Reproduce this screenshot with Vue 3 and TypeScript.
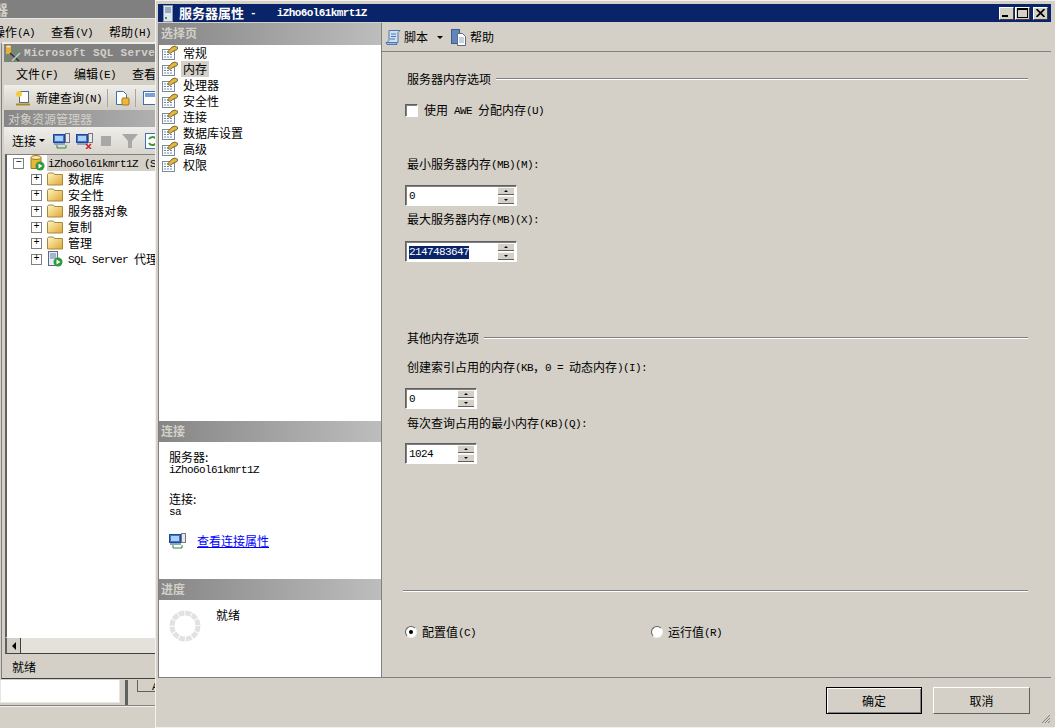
<script setup lang="ts">
import { h, type FunctionalComponent } from 'vue'

const Tx: FunctionalComponent<{ s: string }> = (props) =>
  h(
    'span',
    { class: 'tx' },
    (props.s.match(/[\x00-\x7f]+|[^\x00-\x7f]+/g) ?? []).map((part) =>
      h('span', { class: /^[\x00-\x7f]/.test(part) ? 'lat' : 'cjk' }, part),
    ),
  )

const pages = ['常规', '内存', '处理器', '安全性', '连接', '数据库设置', '高级', '权限']
const treeRows = ['数据库', '安全性', '服务器对象', '复制', '管理']
const backMenu = ['操作(A)', '查看(V)', '帮助(H)']
const innerMenu = ['文件(F)', '编辑(E)', '查看(V)']
</script>

<template>
  <div class="desktop">
    <svg class="defs" width="0" height="0" aria-hidden="true">
      <symbol id="page" viewBox="0 0 16 16">
        <rect x="0.5" y="4.5" width="12" height="10" fill="#fff" stroke="#7f8a99" />
        <path d="M2 7h5M2 9.500h9M2 12h9" stroke="#6f86ac" stroke-dasharray="2 1" />
        <path d="M5.500 7 10 2l3-1 3 1.500-1 2-5 2.500-2 1.500z" fill="#e3b63e" stroke="#5c4a1c" stroke-width="0.8" />
      </symbol>
      <symbol id="folder" viewBox="0 0 16 14">
        <linearGradient id="fg" x1="0" y1="0" x2="1" y2="1">
          <stop offset="0" stop-color="#fff6c8" />
          <stop offset="1" stop-color="#e0a82e" />
        </linearGradient>
        <path d="M.5 13V2.500L1.500 1h5l1 1.500h8V13z" fill="url(#fg)" stroke="#a78a3c" />
      </symbol>
      <symbol id="server" viewBox="0 0 17 16">
        <rect x="0.500" y="1.500" width="11" height="8" fill="#3f74d6" stroke="#26468c" />
        <rect x="2" y="3" width="8" height="5" fill="#a9d0f5" />
        <rect x="1" y="10" width="11" height="2" fill="#8fa4c4" />
        <rect x="12.500" y="0.500" width="4" height="9" fill="#e8e8e8" stroke="#70788a" />
      </symbol>
    </svg>

    <!-- main window behind the dialog -->
    <section class="back">
      <div class="b-title"><span class="b-char">器</span></div>
      <nav class="b-menu">
        <span v-for="m in backMenu" :key="m"><Tx :s="m" /></span>
      </nav>
      <div class="b-inner">
        <div class="i-title">
          <svg class="i-logo" width="16" height="17" viewBox="0 0 16 17">
            <path d="M1.500 5.500h11v10h-11z" fill="none" stroke="#3fa83f" stroke-dasharray="2 1" />
            <rect x="1" y="1" width="5" height="8" fill="#e8b030" />
            <ellipse cx="3.500" cy="1.500" rx="2.500" ry="1" fill="#fbe9a0" />
            <path d="M5 8 14 16" stroke="#333" stroke-width="1.500" />
            <path d="M15 8 7 16" stroke="#c8ccd4" stroke-width="1.500" />
          </svg>
          <span class="i-name">Microsoft SQL Server</span>
        </div>
        <nav class="i-menu">
          <span v-for="m in innerMenu" :key="m"><Tx :s="m" /></span>
        </nav>
        <div class="i-tools">
          <i class="grip"></i>
          <svg width="16" height="16" viewBox="0 0 16 16">
            <rect x="4.500" y="1.500" width="9" height="11" fill="#fff" stroke="#5a6a80" />
            <circle cx="4" cy="4" r="3" fill="#f3cc3c" />
            <path d="M1 14.500h14" stroke="#b08a20" stroke-width="2" />
          </svg>
          <span class="t-label"><Tx s="新建查询(N)" /></span>
          <i class="sep"></i>
          <svg width="15" height="16" viewBox="0 0 15 16">
            <path d="M1.500 1.500h7l3 3v10h-10z" fill="#fff" stroke="#3f6fb0" />
            <rect x="7" y="8" width="7" height="7" rx="1" fill="#f0b838" stroke="#a07818" />
          </svg>
          <i class="sep"></i>
          <svg width="16" height="16" viewBox="0 0 16 16">
            <rect x="0.500" y="1.500" width="13" height="13" fill="#fff" stroke="#3f6fb0" />
            <rect x="2" y="3" width="10" height="4" fill="#7aa0d8" />
          </svg>
        </div>
        <div class="i-head">对象资源管理器</div>
        <div class="i-oe-tools">
          <span class="oe-conn">连接</span>
          <i class="caret"></i>
          <svg class="oe-a" width="17" height="16"><use href="#server" /><path d="M4 12v3h9v-3" fill="none" stroke="#2c8c2c" /></svg>
          <svg class="oe-b" width="17" height="16"><use href="#server" /><path d="M10 11l5 5M15 11l-5 5" stroke="#d02020" stroke-width="1.500" /></svg>
          <i class="oe-stop"></i>
          <svg class="oe-c" width="16" height="14" viewBox="0 0 16 14"><path d="M0 0h16L10 7v7H6V7z" fill="#a8a8a8" /></svg>
          <svg class="oe-d" width="14" height="16" viewBox="0 0 14 16">
            <rect x="0.500" y="0.500" width="14" height="15" fill="#fff" stroke="#3f6fb0" />
            <path d="M4 6a4 4 0 0 1 7 0M11 10a4 4 0 0 1-7 0" fill="none" stroke="#3a9a3a" stroke-width="2" />
          </svg>
        </div>
        <div class="tree">
          <div class="root">
            <i class="box">−</i>
            <svg class="db" width="15" height="16" viewBox="0 0 15 16">
              <path d="M1 2.500h10v11H1z" fill="#eab838" stroke="#9a7a20" />
              <ellipse cx="6" cy="2.500" rx="5" ry="2" fill="#fbe9a0" stroke="#9a7a20" />
              <circle cx="10" cy="11" r="4.500" fill="#2f9a3a" />
              <path d="M8.500 8.500v5l4-2.500z" fill="#fff" />
            </svg>
            <span class="root-name"><Tx s="iZho6ol61kmrt1Z (SQL" /></span>
          </div>
          <div v-for="r in treeRows" :key="r" class="t-row">
            <i class="box">+</i>
            <svg width="16" height="14"><use href="#folder" /></svg>
            <span class="t-text">{{ r }}</span>
          </div>
          <div class="t-row">
            <i class="box">+</i>
            <svg width="16" height="16" viewBox="0 0 16 16">
              <rect x="1.500" y="0.500" width="9" height="14" fill="#e6edf6" stroke="#5a6a80" />
              <path d="M3 3h6M3 5h6M3 7h6" stroke="#5f7fb0" />
              <circle cx="11" cy="11" r="4.500" fill="#2f9a3a" />
              <path d="M9.500 8.500v5l4-2.500z" fill="#fff" />
            </svg>
            <span class="t-text"><Tx s="SQL Server 代理" /></span>
          </div>
        </div>
        <div class="hscroll">
          <i class="arrow-btn"><b></b></i>
        </div>
        <div class="i-status">就绪</div>
      </div>
      <div class="b-under">
        <div class="u-top">
          <div class="u-field"></div>
          <i class="u-bar"></i>
          <div class="u-btn"><span class="lat">A</span></div>
        </div>
        <i class="u-rule"></i>
      </div>
    </section>

    <!-- server properties dialog -->
    <section class="dialog">
      <header class="d-title">
        <svg class="d-icon" width="10" height="17" viewBox="0 0 10 17">
          <rect x="0.500" y="0.500" width="9" height="16" fill="#dfe7f3" stroke="#8a97ab" />
          <path d="M2 3h6M2 5h6M2 7h6" stroke="#5b6e8c" />
          <rect x="2" y="12" width="2" height="2" fill="#3a9a3a" />
        </svg>
        <span class="d-name">服务器属性</span>
        <span class="d-dash">-</span>
        <span class="d-host">iZho6ol61kmrt1Z</span>
        <div class="d-btns">
          <button class="wbtn" type="button" aria-label="最小化"><i class="w-min"></i></button>
          <button class="wbtn" type="button" aria-label="最大化"><i class="w-max"></i></button>
          <button class="wbtn w-gap" type="button" aria-label="关闭">
            <svg width="9" height="8" viewBox="0 0 9 8"><path d="M.5 0 8.500 8M8.500 0 .5 8" stroke="#000" stroke-width="1.700" /></svg>
          </button>
        </div>
      </header>

      <div class="d-body">
        <aside class="side">
          <div class="s-head tall">选择页</div>
          <ul class="s-list">
            <li v-for="(p, i) in pages" :key="p" class="s-item">
              <svg width="16" height="16"><use href="#page" /></svg>
              <span class="s-text" :class="{ on: i === 1 }">{{ p }}</span>
            </li>
          </ul>
          <div class="s-head conn-head">连接</div>
          <div class="s-conn">
            <div class="c-label">服务器:</div>
            <div class="c-val"><span class="lat">iZho6ol61kmrt1Z</span></div>
            <div class="c-label c-second">连接:</div>
            <div class="c-val"><span class="lat">sa</span></div>
            <div class="c-link">
              <svg width="17" height="16"><use href="#server" /><path d="M4 12v3h9v-3" fill="none" stroke="#2c8c2c" /></svg>
              <a href="#" @click.prevent>查看连接属性</a>
            </div>
          </div>
          <div class="s-head">进度</div>
          <div class="s-prog">
            <svg width="32" height="32" viewBox="0 0 32 32" class="spin">
              <circle cx="16" cy="16" r="13" fill="none" stroke="#e2e2e2" stroke-width="5" stroke-dasharray="5.800 1" />
            </svg>
            <span>就绪</span>
          </div>
        </aside>

        <main class="content">
          <div class="c-tools">
            <svg width="17" height="17" viewBox="0 0 17 17">
              <path d="M4 1.500h11l-2 2v10H2l2-2z" fill="#cfe0f3" stroke="#4f79ae" />
              <path d="M6 5h5M6 7.500h5M5 10h5" stroke="#4f79ae" />
              <path d="M1 13.500h10l1 2H2z" fill="#9cbbe0" stroke="#4f79ae" />
            </svg>
            <span class="ct-script">脚本</span>
            <i class="caret ct-caret"></i>
            <svg class="ct-help" width="16" height="17" viewBox="0 0 16 17">
              <rect x="0.500" y="0.500" width="8" height="14" fill="#5f86bd" stroke="#3a5d90" />
              <path d="M6.500 4.500h5l3 3v9h-8z" fill="#fff" stroke="#5a6a80" />
              <path d="M8 9h5M8 11h5M8 13h5" stroke="#8fa2bf" />
            </svg>
            <span class="ct-helptext">帮助</span>
          </div>

          <div class="form">
            <div class="sec s1"><span>服务器内存选项</span><i class="rule"></i></div>
            <label class="check-row"><i class="check sunken"></i><Tx s="使用 AWE 分配内存(U)" /></label>
            <div class="lbl m40"><Tx s="最小服务器内存(MB)(M):" /></div>
            <div class="spin-box wide sunken m14">
              <span class="val"><span class="lat">0</span></span>
              <span class="updown"><i class="up"></i><i class="down"></i></span>
            </div>
            <div class="lbl m6"><Tx s="最大服务器内存(MB)(X):" /></div>
            <div class="spin-box wide sunken m15">
              <span class="val sel-wrap"><span class="lat sel">2147483647</span></span>
              <span class="updown"><i class="up"></i><i class="down"></i></span>
            </div>
            <div class="sec s2"><span>其他内存选项</span><i class="rule"></i></div>
            <div class="lbl m15"><Tx s="创建索引占用的内存(KB，0 = 动态内存)(I):" /></div>
            <div class="spin-box narrow sunken m14">
              <span class="val"><span class="lat">0</span></span>
              <span class="updown"><i class="up"></i><i class="down"></i></span>
            </div>
            <div class="lbl m7"><Tx s="每次查询占用的最小内存(KB)(Q):" /></div>
            <div class="spin-box narrow sunken m13">
              <span class="val"><span class="lat">1024</span></span>
              <span class="updown"><i class="up"></i><i class="down"></i></span>
            </div>
            <i class="rule full"></i>
            <div class="radios">
              <label class="radio-item"><i class="radio checked"></i><Tx s="配置值(C)" /></label>
              <label class="radio-item"><i class="radio"></i><Tx s="运行值(R)" /></label>
            </div>
          </div>
        </main>
      </div>

      <footer class="d-foot">
        <button class="btn primary" type="button">确定</button>
        <button class="btn" type="button">取消</button>
        <svg class="resize" width="10" height="10" viewBox="0 0 10 10">
          <path d="M9 1 1 9M9 4 4 9M9 7 7 9" stroke="#808080" />
        </svg>
      </footer>
    </section>
  </div>
</template>

<style scoped>
.desktop {
  position: relative;
  width: 1055px;
  height: 728px;
  overflow: hidden;
  background: #d4d0c8;
  font: 12px/14px "Noto Sans CJK SC", "Liberation Mono", sans-serif;
  color: #000;
}
.defs { position: absolute; }
i { display: block; font-style: normal; }
svg { display: block; flex: none; }

/* back window */
.back { position: absolute; left: 0; top: 0; width: 155px; height: 728px; overflow: hidden; }
.b-title { height: 18px; background: #808080; border-bottom: 1px solid #e8e6e0; overflow: hidden; }
.b-char { display: block; margin-left: -6px; font-weight: 700; font-size: 14px; line-height: 18px; color: #d4d0c8; }
.b-menu { height: 23px; box-sizing: border-box; padding-top: 3px; display: flex; align-items: center; gap: 16px; margin-left: -7px; white-space: nowrap; }
.b-inner {
  height: 637px;
  display: flex;
  flex-direction: column;
  border-top: 2px solid #eeece6;
  border-left: 1px solid #808080;
  border-bottom: 1px solid #404040;
  margin-left: 1px;
  padding-left: 2px;
  box-sizing: border-box;
}
.i-title { height: 18px; flex: none; background: #808080; display: flex; align-items: center; padding-left: 1px; white-space: nowrap; overflow: hidden; }
.i-logo { margin-right: 3px; }
.i-name { font: 700 11px/18px "Liberation Mono", monospace; letter-spacing: 0.300px; color: #d4d0c8; }
.i-menu { height: 23px; box-sizing: border-box; padding: 1px 0 0 12px; flex: none; display: flex; align-items: center; gap: 16px; white-space: nowrap; }
.i-tools { height: 23px; box-sizing: border-box; flex: none; display: flex; align-items: center; padding: 2px 0 0 8px; background: linear-gradient(#efede8, #d4d0c8); white-space: nowrap; }
.grip { width: 3px; height: 16px; margin-right: 3px; background: repeating-linear-gradient(#8a8a8a 0 2px, transparent 2px 4px); }
.t-label { margin: 0 0 0 5px; }
.sep { width: 1px; height: 18px; background: #a8a6a0; margin: 0 7px 0 5px; flex: none; }
.i-head { margin-top: 2px; height: 17px; flex: none; line-height: 17px; padding-left: 4px; color: #d4d0c8; background: linear-gradient(90deg, #868686, #b0b0b0); white-space: nowrap; }
.i-oe-tools { height: 27px; flex: none; display: flex; align-items: center; background: linear-gradient(#f0eeea, #d8d5ce); padding-left: 8px; }
.oe-conn { width: 27px; flex: none; white-space: nowrap; }
.caret { width: 0; height: 0; flex: none; border: 3px solid transparent; border-top: 3px solid #000; border-bottom: 0; }
.oe-a { margin-left: 8px; }
.oe-b { margin-left: 6px; }
.oe-stop { width: 10px; height: 10px; background: #a8a8a8; margin-left: 8px; flex: none; }
.oe-c { margin-left: 11px; }
.oe-d { margin-left: 7px; }
.tree { flex: 1; background: #fff; border-top: 1px solid #808080; border-left: 2px solid #606060; margin-left: 1px; min-height: 0; overflow: hidden; white-space: nowrap; }
.box {
  width: 9px; height: 9px; border: 1px solid #808080; background: #fff; flex: none;
  font: 10px/8px "Liberation Mono", monospace; text-align: center;
}
.root { height: 16px; display: flex; align-items: center; padding-left: 6px; }
.db { margin-left: 6px; }
.root-name { margin-left: 2px; background: #d4d0c8; flex: 1; line-height: 16px; padding-left: 1px; }
.t-row { height: 16px; display: flex; align-items: center; padding-left: 24px; }
.t-row svg { margin-left: 5px; }
.t-text { margin-left: 5px; }
.hscroll { height: 15px; flex: none; background: #e4e1da; border-top: 1px solid #fff; border-bottom: 1px solid #404040; margin-left: 1px; border-left: 2px solid #606060; }
.arrow-btn { width: 13px; height: 15px; background: #d4d0c8; border-right: 1px solid #404040; display: flex; align-items: center; justify-content: center; }
.arrow-btn b { width: 0; height: 0; border: 4px solid transparent; border-right: 4px solid #000; border-left: 0; }
.i-status { height: 24px; flex: none; line-height: 25px; padding-left: 8px; }
.b-under { height: 49px; padding-top: 1px; box-sizing: border-box; }
.u-top { height: 25px; display: flex; }
.u-field { width: 120px; height: 23px; background: #fff; border: 1px solid #e8e6e0; box-sizing: border-box; border-top: 0; flex: none; }
.u-bar { width: 3px; height: 25px; background: #606060; margin-left: 5px; flex: none; }
.u-btn { width: 18px; height: 12px; flex: none; margin-left: 9px; border-left: 1px solid #606060; border-bottom: 1px solid #606060; padding-left: 14px; overflow: hidden; line-height: 12px; box-sizing: border-box; white-space: nowrap; }
.u-rule { height: 1px; background: #808080; border-bottom: 1px solid #f2f1ec; }

/* dialog */
.dialog {
  position: absolute; left: 155px; top: 0; width: 900px; height: 728px;
  box-sizing: border-box;
  display: flex; flex-direction: column;
  border-left: 1px solid #f2f1ec;
  border-top: 1px solid #f2f1ec;
  border-bottom: 1px solid #f2f1ec;
  padding: 3px 4px 2px 2px;
  background: #d4d0c8;
}
.d-title { height: 18px; flex: none; background: #0a246a; color: #fff; display: flex; align-items: center; padding-left: 5px; white-space: nowrap; }
.d-name { margin-left: 6px; font-weight: 700; font-size: 13px; }
.d-dash { margin-left: 6px; font: 700 11px/14px "Liberation Mono", monospace; }
.d-host { margin-left: 20px; font: 700 11px/14px "Liberation Mono", monospace; letter-spacing: -0.600px; }
.d-btns { margin-left: auto; display: flex; gap: 1px; padding-right: 3px; }
.wbtn {
  width: 15px; height: 13px; padding: 0; background: #d4d0c8; display: flex; align-items: center; justify-content: center;
  border: 1px solid; border-color: #fff #404040 #404040 #fff;
}
.w-gap { margin-left: 2px; }
.w-min { width: 6px; height: 2px; background: #000; margin-top: 6px; margin-right: 3px; }
.w-max { width: 9px; height: 7px; border: 1px solid #000; border-top-width: 2px; }
.d-body { flex: 1; min-height: 0; display: flex; margin-top: 1px; }

.side {
  width: 224px; flex: none; box-sizing: border-box;
  display: flex; flex-direction: column;
  background: #fff;
  border: 1px solid #808080; border-top: 0;
}
.s-head { height: 21px; flex: none; line-height: 20px; padding-left: 2px; font-weight: 700; color: #d4d0c8; background: linear-gradient(90deg, #868686, #bdbdbd); }
.s-head.tall { height: 22px; line-height: 19px; }
.s-head.conn-head { line-height: 19px; }
.s-list { list-style: none; margin: 0; padding: 0; height: 376px; flex: none; }
.s-item { height: 16px; display: flex; align-items: center; padding-left: 3px; }
.s-text { margin-left: 3px; padding: 0 2px; line-height: 16px; }
.s-text.on { background: #d4d0c8; }
.s-conn { height: 137px; flex: none; padding: 8px 0 0 10px; box-sizing: border-box; }
.c-val { height: 10px; line-height: 10px; }
.c-second { margin-top: 18px; }
.c-link { margin-top: 17px; display: flex; align-items: center; height: 16px; gap: 11px; }
.c-link a { color: #0000ff; text-decoration: underline; }
.s-prog { flex: 1; display: flex; gap: 15px; padding: 8px 0 0 10px; }
.spin { margin-top: 2px; }

.content { flex: 1; min-width: 0; display: flex; flex-direction: column; border-bottom: 1px solid #808080; }
.c-tools { height: 28px; flex: none; border-bottom: 1px solid #808080; display: flex; align-items: center; padding-left: 3px; }
.ct-script { margin-left: 2px; }
.ct-caret { margin-left: 9px; }
.ct-help { margin-left: 8px; }
.ct-helptext { margin-left: 3px; }
.form { padding: 0 23px 0 23px; }
.sec { display: flex; align-items: center; gap: 5px; padding-left: 2px; height: 14px; }
.s1 { margin-top: 20px; }
.s2 { margin-top: 69px; }
.rule { flex: 1; height: 1px; background: #808080; border-bottom: 1px solid #fff; }
.rule.full { margin: 126px 0 0 -2px; }
.check-row { display: flex; align-items: center; gap: 6px; margin-top: 17px; height: 14px; }
.sunken { border: 1px solid; border-color: #606060 #fff #fff #606060; box-shadow: inset 1px 1px #808080; box-sizing: border-box; background: #fff; }
.check { width: 13px; height: 13px; }
.lbl { padding-left: 2px; height: 14px; line-height: 13px; white-space: nowrap; }
.m6 { margin-top: 6px; }
.m7 { margin-top: 7px; }
.m13 { margin-top: 13px; }
.m14 { margin-top: 14px; }
.m15 { margin-top: 15px; }
.m40 { margin-top: 40px; }
.spin-box { height: 21px; display: flex; align-items: center; padding: 2px; }
.wide { width: 112px; }
.narrow { width: 72px; }
.val { flex: 1; line-height: 14px; padding: 0 0 2px 1px; }
.val.sel-wrap { padding-bottom: 0; }
.sel { background: #0a246a; color: #fff; display: inline-block; line-height: 13px; vertical-align: middle; }
.updown { width: 16px; display: flex; flex-direction: column; gap: 1px; flex: none; }
.updown i { height: 8px; background: #d4d0c8; border-top: 1px solid #f4f3ef; border-bottom: 1px solid #606060; box-sizing: border-box; position: relative; }
.updown i::after { content: ""; position: absolute; left: 6px; top: 2px; width: 0; height: 0; border: 2px solid transparent; }
.up::after { border-bottom-color: #000 !important; border-top: 0 !important; }
.down::after { border-top-color: #000 !important; border-bottom: 0 !important; }
.radios { display: flex; margin-top: 33px; height: 14px; }
.radio-item { display: flex; align-items: center; gap: 5px; width: 246px; flex: none; }
.radio { width: 12px; height: 12px; flex: none; border-radius: 50%; box-sizing: border-box; background: #fff; border: 1px solid; border-color: #606060 #f4f3ef #f4f3ef #606060; position: relative; }
.checked::after { content: ""; position: absolute; left: 3px; top: 3px; width: 4px; height: 4px; border-radius: 50%; background: #000; }

.d-foot { height: 47px; flex: none; position: relative; display: flex; justify-content: flex-end; align-items: flex-start; gap: 11px; padding: 9px 21px 0 0; box-sizing: border-box; }
.btn {
  width: 97px; height: 27px; padding: 0; font: inherit; color: #000; background: #d4d0c8;
  border: 1px solid; border-color: #fff #606060 #606060 #fff;
}
.btn.primary { width: 96px; border: 1px solid #000; box-shadow: inset 1px 1px #fff, inset -1px -1px #808080; }
.resize { position: absolute; right: 0; bottom: 1px; }
</style>

<style>
.tx { white-space: pre; }
.lat { font: 11px/1 "Liberation Mono", monospace; letter-spacing: -0.600px; white-space: pre; vertical-align: 1px; }
</style>
